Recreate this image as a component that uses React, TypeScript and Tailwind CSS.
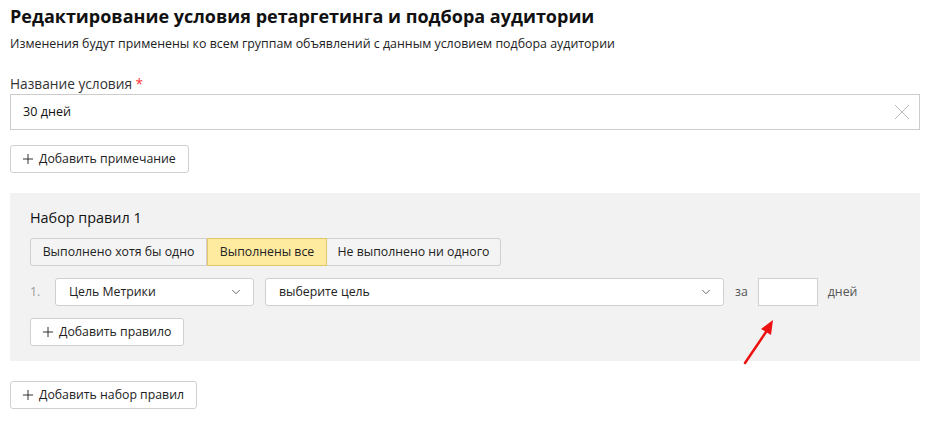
import { Plus, ChevronDown } from 'lucide-react'

const font = { fontFamily: '"Open Sans", "Liberation Sans", Arial, sans-serif' }

const AddButton = ({ label }: { label: string }) => (
  <button className="flex h-[28px] items-center gap-[3px] rounded-[3px] border border-[#d0d0d0] bg-white pl-[9px] pr-[12px] text-[12.3px] text-[#222]">
    <Plus className="h-[16px] w-[16px]" strokeWidth={1.4} />
    {label}
  </button>
)

const Select = ({ label, className }: { label: string; className: string }) => (
  <div
    className={`flex h-[28px] items-center justify-between rounded-[3px] border border-[#cfcfcf] bg-white pl-[13px] pr-[10px] text-[12.3px] text-[#222] ${className}`}
  >
    <span>{label}</span>
    <ChevronDown className="h-[14px] w-[14px] text-[#555]" strokeWidth={1.5} />
  </div>
)

export default function App() {
  return (
    <div className="relative h-[429px] w-[930px] bg-white px-[10px] text-black" style={font}>
      {/* Header */}
      <h1 className="pt-[4px] text-[18px] font-bold leading-[24px] text-[#111]">
        Редактирование условия ретаргетинга и подбора аудитории
      </h1>
      <p className="mt-[8px] text-[12.4px] leading-[16px] text-[#222]">
        Изменения будут применены ко всем группам объявлений с данным условием подбора аудитории
      </p>

      {/* Name field */}
      <div className="mt-[23px] text-[13.7px] leading-[18px] text-[#333]">
        Название условия <span className="text-[#ff3333]">*</span>
      </div>
      <div className="mt-[1px] flex h-[36px] items-center justify-between border border-[#cccccc] bg-white pl-[12px] pr-[9px] text-[12.6px] text-[#111]">
        <span>30 дней</span>
        <svg width="16" height="16" viewBox="0 0 16 16">
          <path d="M1 1L15 15M15 1L1 15" stroke="#b8b8b8" strokeWidth="1" />
        </svg>
      </div>

      <div className="mt-[15px] flex">
        <AddButton label="Добавить примечание" />
      </div>

      {/* Rule set */}
      <div className="mt-[20px] bg-[#f2f2f2] px-[20px] pb-[15px] pt-[15px]">
        <div className="text-[14.4px] leading-[20px] text-[#111]">Набор правил 1</div>

        <div className="mt-[10px] flex h-[28px] w-fit text-[12.3px] text-[#222]">
          <div className="flex w-[177px] items-center justify-center rounded-l-[3px] border border-[#d0d0d0] bg-[#f4f4f4]">
            Выполнено хотя бы одно
          </div>
          <div className="flex w-[120px] items-center justify-center border border-[#e3c66a] bg-[#ffeba0]">
            Выполнены все
          </div>
          <div className="flex w-[174px] items-center justify-center rounded-r-[3px] border border-l-0 border-[#d0d0d0] bg-[#f4f4f4]">
            Не выполнено ни одного
          </div>
        </div>

        <div className="mt-[12px] flex h-[28px] items-center text-[12.3px]">
          <span className="w-[25px] text-[#999]">1.</span>
          <Select label="Цель Метрики" className="w-[199px]" />
          <Select label="выберите цель" className="ml-[11px] w-[459px]" />
          <span className="ml-[11px] text-[#555]">за</span>
          <div className="ml-[10px] h-[28px] w-[60px] border border-[#cfcfcf] bg-white" />
          <span className="ml-[10px] text-[#555]">дней</span>
        </div>

        <div className="mt-[12px] flex">
          <AddButton label="Добавить правило" />
        </div>
      </div>

      <div className="mt-[20px] flex">
        <AddButton label="Добавить набор правил" />
      </div>

      {/* annotation arrow */}
      <svg className="absolute left-[740px] top-[315px]" width="40" height="52" viewBox="0 0 40 52">
        <line x1="5" y1="48" x2="28" y2="14" stroke="#ee1111" strokeWidth="2.5" strokeLinecap="round" />
        <polygon points="33,5 21,14 31,20" fill="#ee1111" />
      </svg>
    </div>
  )
}
